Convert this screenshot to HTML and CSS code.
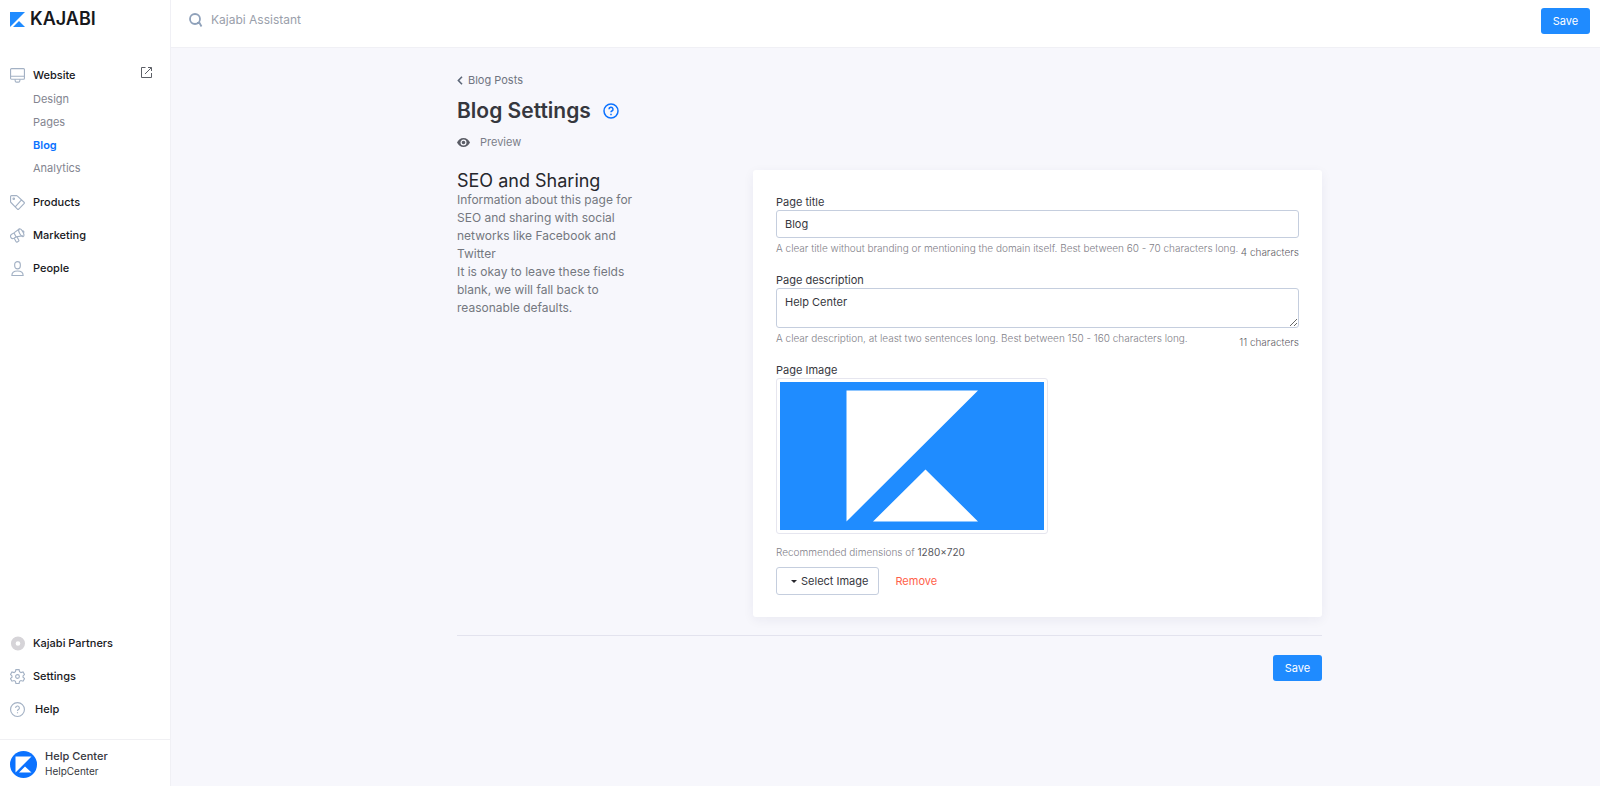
FILE: index.html
```
<!DOCTYPE html>
<html lang="en">
<head>
    <meta charset="UTF-8">
    <meta name="viewport" content="width=device-width, initial-scale=1.0">
    <title>Blog Settings</title>
    <link rel="stylesheet" href="styles.css">
</head>
<body>

<aside class="sidebar">
    <a href="#" class="logo">
        <svg width="15" height="15" viewBox="0 0 15 15" fill="#1f8bff"><path d="M0 0h15L0 15z"/><path d="M9 9l6 6H3z"/></svg>
        <span>KAJABI</span>
    </a>

    <nav class="nav">
        <div class="navRow">
            <a href="#" class="navItem">
                <svg class="icon" viewBox="0 0 16 16"><rect x=".6" y=".6" width="14.8" height="11.4" rx="1"/><path d="M.6 8.8h14.8M5.5 12v1.5a1.5 1.5 0 0 0 1.5 1.5h2a1.5 1.5 0 0 0 1.5-1.5V12"/></svg>
                Website
            </a>
            <a href="#" class="openSite" aria-label="Open website">
                <svg width="11" height="11" viewBox="0 0 11 11" fill="none" stroke="#5c5f66"><path d="M4.5.5h-4v10h10V6M7 .5h3.500V4M10.300.7L4 7"/></svg>
            </a>
        </div>
        <ul class="subNav">
            <li><a href="#">Design</a></li>
            <li><a href="#">Pages</a></li>
            <li><a href="#" class="active">Blog</a></li>
            <li><a href="#">Analytics</a></li>
        </ul>
        <a href="#" class="navItem">
            <svg class="icon" viewBox="0 0 16 16"><path d="M.6 1.600a1 1 0 0 1 1-1H7a1 1 0 0 1 .7.3l7.300 6.800a1 1 0 0 1 0 1.400L9.300 15a1 1 0 0 1-1.400 0L1 8a1 1 0 0 1-.4-.7zM12.300 5.300L5.800 12.300"/><circle cx="4" cy="4" r=".8"/></svg>
            Products
        </a>
        <a href="#" class="navItem">
            <svg class="icon" viewBox="0 0 16 16"><path d="M10.200.8L4.200 5.200 1.800 6.600C.5 7.400.2 8.800.9 10s2 1.600 3.300.9l2.400-1.400 7.200-1.300M4.200 5.200l2.400 4.300"/><ellipse cx="12" cy="5" rx="1.900" ry="4.600" transform="rotate(-28 12 5)"/><path d="M13 3.200c1.300-.6 2.400.8 1.300 2M4.500 11l2 3.600c.3.500.8.6 1.300.3l1.200-.7c.5-.3.6-.8.3-1.300L7.500 9.500"/></svg>
            Marketing
        </a>
        <a href="#" class="navItem">
            <svg class="icon" viewBox="0 0 16 16"><rect x="5" y=".6" width="6" height="7.800" rx="3"/><path d="M2 15.400c0-3.200 2.300-4.800 6-4.800s6 1.600 6 4.800z"/></svg>
            People
        </a>
    </nav>

    <nav class="nav navBottom">
        <a href="#" class="navItem">
            <svg class="icon iconPartners" viewBox="0 0 16 16"><circle cx="8.500" cy="8" r="5"/></svg>
            Kajabi Partners
        </a>
        <a href="#" class="navItem">
            <svg class="icon" viewBox="0 0 16 16"><path d="M6.300.7h3.400l.5 2.200 1.500.9 2.200-.7 1.600 2.800L13.900 7.400v1.300l1.600 1.500-1.600 2.800-2.200-.7-1.500.9-.5 2.200H6.300l-.5-2.200-1.500-.9-2.200.7L.5 10.200l1.600-1.500V7.400L.5 5.900l1.600-2.800 2.200.7 1.500-.9z"/><circle cx="8" cy="8" r="2"/></svg>
            Settings
        </a>
        <a href="#" class="navItem navHelp">
            <svg class="icon" viewBox="0 0 16 16"><circle cx="8" cy="8" r="7.400"/><path d="M6 6.300a2 2 0 1 1 2.900 1.800c-.7.4-.9.7-.9 1.500M8 10.900v1.200"/></svg>
            Help
        </a>
    </nav>

    <a href="#" class="account">
        <svg width="27" height="27" viewBox="0 0 27 27"><circle cx="13.500" cy="13.500" r="13.500" fill="#0b72ff"/><path d="M5.500 5.500h16l-16 16zM15 15.500l6.500 6H9z" fill="#fff"/></svg>
        <span>
            <strong>Help Center</strong>
            <small>HelpCenter</small>
        </span>
    </a>
</aside>

<div class="page">
    <header class="topbar">
        <label class="search">
            <svg width="14" height="14" viewBox="0 0 14 14" fill="none" stroke="#8fa1ba" stroke-width="1.800"><circle cx="6" cy="6" r="5"/><path d="M8 10h2.500l2 3.500"/></svg>
            <input type="text" placeholder="Kajabi Assistant" aria-label="Kajabi Assistant">
        </label>
        <button type="submit" form="settings" class="save">Save</button>
    </header>

    <main class="content">
        <a href="#" class="back">
            <svg width="6" height="9" viewBox="0 0 6 9" fill="none" stroke="#5d6879" stroke-width="1.600"><path d="M5 .7L1.400 4.500 5 8.300"/></svg>
            Blog Posts
        </a>
        <div class="titleRow">
            <h1>Blog Settings</h1>
            <a href="#" class="titleHelp" aria-label="Help">
                <svg width="16" height="16" viewBox="0 0 16 16" fill="none" stroke="#0b72ff" stroke-width="1.500"><circle cx="8" cy="8" r="7"/><path d="M6 6.200a2 2 0 1 1 2.900 1.800c-.7.4-.9.700-.9 1.300M8 10.700v1.500"/></svg>
            </a>
        </div>
        <a href="#" class="preview">
            <svg width="13" height="9" viewBox="0 0 13 9"><path d="M0 4.500C1.300 1.800 3.500 0 6.500 0S11.700 1.800 13 4.500C11.700 7.200 9.500 9 6.500 9S1.300 7.200 0 4.500z" fill="#5b5d66"/><circle cx="6.500" cy="4.500" r="2.400" fill="#5b5d66" stroke="#f7f7fc" stroke-width="1.200"/></svg>
            Preview
        </a>

        <form id="settings" onsubmit="return false">
            <div class="columns">
                <section class="intro">
                    <h2>SEO and Sharing</h2>
                    <p>Information about this page for SEO and sharing with social networks like Facebook and Twitter</p>
                    <p>It is okay to leave these fields blank, we will fall back to reasonable defaults.</p>
                </section>

                <section class="card">
                    <div class="field">
                        <label for="pageTitle">Page title</label>
                        <input type="text" id="pageTitle" value="Blog">
                        <div class="hints">
                            <p>A clear title without branding or mentioning the domain itself. Best between 60 - 70 characters long.</p>
                            <span class="count">4 characters</span>
                        </div>
                    </div>
                    <div class="field">
                        <label for="pageDescription">Page description</label>
                        <textarea id="pageDescription">Help Center</textarea>
                        <div class="hints">
                            <p>A clear description, at least two sentences long. Best between 150 - 160 characters long.</p>
                            <span class="count">11 characters</span>
                        </div>
                    </div>
                    <div class="field">
                        <label for="selectImage">Page Image</label>
                        <div class="thumb">
                            <svg viewBox="0 0 264 148" role="img" aria-label="Page image"><path fill="#1f8cff" d="M0 0h264v148H0z"/><path fill="#fff" d="M66.500 8.500H198L66.500 139.500zM145.500 87.500L198 139.500H93z"/></svg>
                        </div>
                        <p class="dimensions">Recommended dimensions of <b>1280×720</b></p>
                        <div class="actions">
                            <button type="button" id="selectImage" class="select"><span class="caret"></span>Select Image</button>
                            <button type="button" class="remove">Remove</button>
                        </div>
                    </div>
                </section>
            </div>

            <div class="formFooter">
                <button type="submit" class="save">Save</button>
            </div>
        </form>
    </main>
</div>

</body>
</html>
```
FILE: styles.css
```
* {
    box-sizing: border-box;
}

body {
    display: flex;
    min-height: 100vh;
    margin: 0;
    background-color: #f7f7fc;
    color: #36373e;
    font-family: Inter, sans-serif;
    font-size: 11px;
    line-height: 16px;
}

h1, h2, p, ul {
    margin: 0;
    padding: 0;
}

a {
    color: inherit;
    text-decoration: none;
}

button, input, textarea {
    font: inherit;
    color: inherit;
}

button {
    cursor: pointer;
}

svg {
    display: block;
    flex: none;
}

/* Sidebar */
.sidebar {
    display: flex;
    flex: none;
    flex-direction: column;
    width: 171px;
    background-color: #fff;
    border-right: 1px solid #f0f0f5;
}

.logo {
    display: flex;
    align-items: center;
    gap: 5px;
    padding: 9px 10px 0;
    color: #17181c;
    font-size: 18px;
    font-weight: 600;
    line-height: 20px;
}

.nav {
    display: flex;
    flex-direction: column;
    gap: 17px;
    padding: 38px 10px 0;
}

.navRow {
    display: flex;
    justify-content: space-between;
}

.navItem {
    display: flex;
    align-items: center;
    gap: 8px;
    color: #17181c;
    font-weight: 500;
}

.openSite {
    padding-right: 8px;
}

.icon {
    width: 15px;
    height: 15px;
    fill: none;
    stroke: #a3b1c4;
    stroke-width: 1.2;
}

.iconPartners {
    stroke: #d6d4d8;
    stroke-width: 5;
}

.subNav {
    margin: -12px 0 -3px;
    padding-left: 23px;
    color: #83858f;
    line-height: 23px;
    list-style-type: none;
}

.subNav .active {
    color: #0b72ff;
    font-weight: 600;
}

.navBottom {
    margin-top: auto;
    padding: 0 10px 22px;
}

.navHelp {
    gap: 10px;
}

.account {
    display: flex;
    align-items: center;
    gap: 8px;
    padding: 9px 10px 7px;
    border-top: 1px solid #f0f0f3;
    line-height: 15px;
}

.account strong, .account small {
    display: block;
    font-size: 11px;
}

.account strong {
    font-weight: 500;
}

.account small {
    font-size: 10px;
}

/* Top bar */
.page {
    flex: 1;
    min-width: 0;
}

.topbar {
    display: flex;
    align-items: flex-start;
    justify-content: space-between;
    height: 48px;
    padding: 8px 10px 0 18px;
    background-color: #fff;
    border-bottom: 1px solid #f0f0f5;
}

.search {
    display: flex;
    align-items: center;
    gap: 8px;
    padding-top: 4px;
    font-size: 12px;
}

.search input {
    width: 240px;
    padding: 0;
    border: 0;
    outline: 0;
}

.search input::placeholder {
    color: #9aa0ab;
}

.save {
    width: 49px;
    height: 26px;
    padding: 0;
    border: 0;
    border-radius: 3px;
    background-color: #1f8bff;
    color: #fff;
}

/* Content */
.content {
    max-width: 873px;
    margin: 0 auto;
    padding: 24px 0 24px 8px;
}

.back, .preview, .titleRow {
    display: flex;
    align-items: center;
}

.back {
    gap: 5px;
    color: #6f7480;
}

.titleRow {
    gap: 12px;
    margin-top: 9px;
}

h1 {
    font-size: 21px;
    font-weight: 600;
    line-height: 28px;
}

.preview {
    gap: 10px;
    margin-top: 9px;
    color: #7b7e89;
}

.columns {
    display: grid;
    grid-template-columns: 296px 1fr;
    margin-top: 20px;
}

.intro {
    padding-right: 108px;
    color: #74777f;
    font-size: 12px;
    line-height: 18px;
}

h2 {
    color: #26272d;
    font-size: 18px;
    font-weight: 400;
    line-height: 21px;
}

.card {
    display: flex;
    flex-direction: column;
    gap: 12px;
    padding: 24px 23px 22px;
    border-radius: 3px;
    background-color: #fff;
    box-shadow: 0 3px 12px rgba(40, 40, 90, 0.06);
}

.field label {
    display: block;
}

.field input, .field textarea {
    display: block;
    width: 100%;
    border: 1px solid #c5cede;
    border-radius: 3px;
    background-color: #fff;
}

.field input {
    height: 28px;
    padding: 0 8px;
}

.field textarea {
    height: 40px;
    padding: 5px 8px;
}

.hints {
    display: flex;
    justify-content: space-between;
    padding-top: 2px;
    color: #7f8088;
    font-size: 10px;
    font-weight: 300;
}

.count {
    flex: none;
    padding-top: 4px;
    color: #5f6068;
}

.thumb {
    width: 272px;
    padding: 3px;
    border: 1px solid #e6e6ef;
    border-radius: 3px;
}

.dimensions {
    padding: 10px 0 7px;
    color: #7f8088;
    font-size: 10px;
    font-weight: 300;
}

.dimensions b {
    color: #55565d;
    font-weight: 400;
}

.actions {
    display: flex;
    gap: 16px;
}

.select {
    display: flex;
    align-items: center;
    gap: 4px;
    height: 28px;
    padding: 0 10px 0 14px;
    border: 1px solid #c5cede;
    border-radius: 3px;
    background-color: #fff;
}

.caret {
    border: 3px solid transparent;
    border-top-color: #26272d;
    border-bottom: 0;
}

.remove {
    padding: 0;
    border: 0;
    background: none;
    color: #ff5f4a;
}

.formFooter {
    display: flex;
    justify-content: flex-end;
    margin-top: 18px;
    padding-top: 19px;
    border-top: 1px solid #e3e3ee;
}
```
